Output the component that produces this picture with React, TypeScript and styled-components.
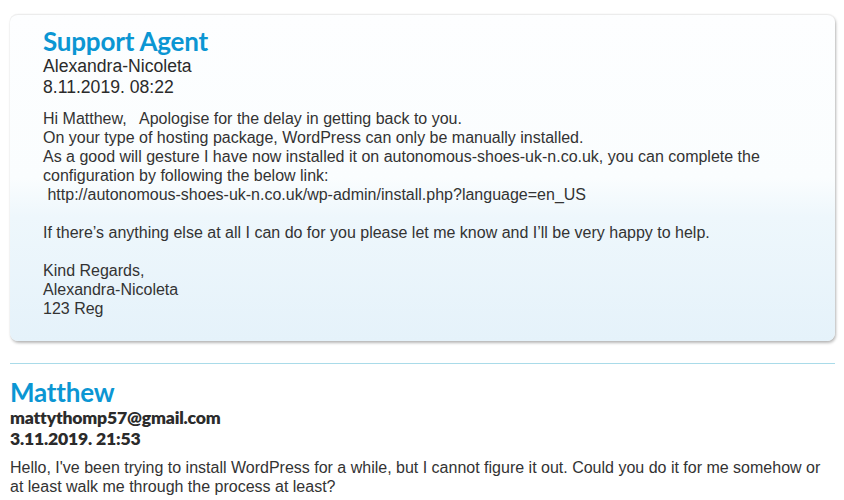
import React from "react";
import styled, { createGlobalStyle } from "styled-components";

const Global = createGlobalStyle`
  html, body { margin: 0; padding: 0; background: #ffffff; }
  body { font-family: "Liberation Sans", Arial, sans-serif; color: #333333; }
`;

const Page = styled.div`
  padding: 14px 9px 0 10px;
  display: flex;
  flex-direction: column;
`;

const Card = styled.section`
  border-radius: 8px;
  border-top: 1px solid #ececec;
  background: linear-gradient(to bottom, #fdfeff 0%, #fafdfe 50%, #eef7fc 62%, #e5f2fa 100%);
  box-shadow: 1px 2px 3px rgba(0, 0, 0, 0.28), 0 0 1px rgba(0, 0, 0, 0.12);
  padding: 11px 33px 23px 33px;
`;

const Plain = styled.section`
  padding: 0;
`;

const Divider = styled.hr`
  border: none;
  border-top: 1px solid #a9dbe9;
  margin: 22px 0 14px 0;
`;

const Name = styled.h2<{ $lh?: number }>`
  margin: 0;
  font-family: Lato, "Noto Sans", sans-serif;
  font-weight: 700;
  font-size: 26px;
  line-height: ${(p) => p.$lh ?? 30}px;
  color: #0b96d3;
  letter-spacing: -0.2px;
`;

const Meta = styled.div<{ $bold?: boolean }>`
  font-family: ${(p) => (p.$bold ? 'Lato, "Noto Sans", sans-serif' : '"Liberation Sans", Arial, sans-serif')};
  font-weight: ${(p) => (p.$bold ? 800 : 400)};
  font-size: 17.6px;
  line-height: 21px;
  color: #2b2b2b;
  letter-spacing: ${(p) => (p.$bold ? "-0.2px" : "0")};
`;

const Body = styled.div<{ $gap: number }>`
  margin-top: ${(p) => p.$gap}px;
  font-size: 16px;
  line-height: 19px;
  color: #333333;
  white-space: pre-wrap;
`;

export default function App() {
  return (
    <>
      <Global />
      <Page>
        <Card>
          <Name>Support Agent</Name>
          <Meta>Alexandra-Nicoleta</Meta>
          <Meta>8.11.2019. 08:22</Meta>
          <Body $gap={11}>
            {`Hi Matthew,   Apologise for the delay in getting back to you.
On your type of hosting package, WordPress can only be manually installed.
As a good will gesture I have now installed it on autonomous-shoes-uk-n.co.uk, you can complete the configuration by following the below link:
 http://autonomous-shoes-uk-n.co.uk/wp-admin/install.php?language=en_US

If there\u2019s anything else at all I can do for you please let me know and I\u2019ll be very happy to help.

Kind Regards,
Alexandra-Nicoleta
123 Reg`}
          </Body>
        </Card>
        <Divider />
        <Plain>
          <Name $lh={29}>Matthew</Name>
          <Meta $bold>mattythomp57@gmail.com</Meta>
          <Meta $bold>3.11.2019. 21:53</Meta>
          <Body $gap={9}>
            {`Hello, I've been trying to install WordPress for a while, but I cannot figure it out. Could you do it for me somehow or at least walk me through the process at least?`}
          </Body>
        </Plain>
      </Page>
    </>
  );
}
